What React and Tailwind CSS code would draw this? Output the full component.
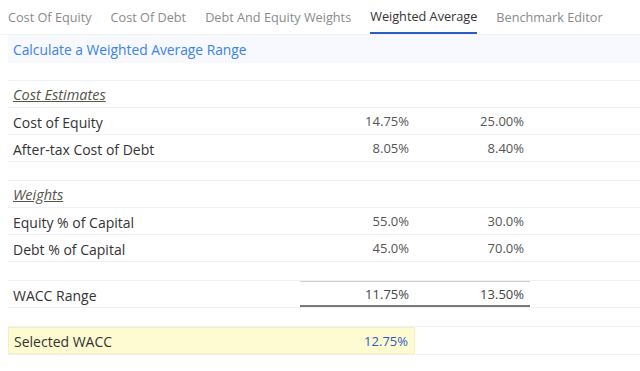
import React from 'react';

const tabs = ['Cost Of Equity', 'Cost Of Debt', 'Debt And Equity Weights', 'Weighted Average', 'Benchmark Editor'];

function Row({ label, a, b, italic }) {
    return (
        <div className="flex h-[27px] items-center pt-[2px] border-b border-[#f0f0f8] text-[13px]">
            <div className={`w-[292px] pl-[5px] ${italic ? 'italic underline text-[14.5px] text-[#55554a]' : 'text-[14px] text-[#333]'}`}>{label}</div>
            <div className="w-[115px] pr-[6px] text-right text-[#555]">{a}</div>
            <div className="w-[115px] pr-[6px] text-right text-[#555]">{b}</div>
        </div>
    );
}

function Spacer({ h }) {
    return <div className={`${h} border-b border-[#f0f0f8]`} />;
}

export default function App() {
    return (
        <div className="w-[640px] h-[371px] bg-white overflow-hidden" style={{ fontFamily: '"Open Sans", "Liberation Sans", sans-serif' }}>
            <div className="flex h-[35px] pl-[8px] gap-[19px] border-b border-[#f2f2f2] text-[12.7px]">
                {tabs.map((t) => (
                    <div
                        key={t}
                        className={`flex items-center h-full pt-[2px] ${t === 'Weighted Average' ? 'text-[#333] border-b-2 border-[#2b5bc6]' : 'text-[#8a8a8a]'}`}
                    >
                        {t}
                    </div>
                ))}
            </div>
            <div className="ml-[8px]">
                <div className="h-[28px] bg-[#f7f9fe] flex items-center pl-[5px] pt-[2px] text-[13.8px] text-[#3a82ee]">
                    Calculate a Weighted Average Range
                </div>
                <Spacer h="h-[18px]" />
                <Row label="Cost Estimates" italic />
                <Row label="Cost of Equity" a="14.75%" b="25.00%" />
                <Row label="After-tax Cost of Debt" a="8.05%" b="8.40%" />
                <Spacer h="h-[19px]" />
                <Row label="Weights" italic />
                <Row label="Equity % of Capital" a="55.0%" b="30.0%" />
                <Row label="Debt % of Capital" a="45.0%" b="70.0%" />
                <Spacer h="h-[19px]" />
                <div className="flex h-[27px] border-b border-[#f0f0f8] text-[13px]">
                    <div className="w-[292px] pl-[5px] pt-[2px] flex items-center text-[14px] text-[#333]">WACC Range</div>
                    <div className="flex w-[230px] pt-[2px] border-t border-[#cfcfcf] border-b-2 border-b-[#7a7a7a]">
                        <div className="w-[115px] pr-[6px] flex items-center justify-end text-[#444]">11.75%</div>
                        <div className="w-[115px] pr-[6px] flex items-center justify-end text-[#444]">13.50%</div>
                    </div>
                </div>
                <Spacer h="h-[19px]" />
                <div className="flex h-[28px] border-b border-[#f0f0f8] text-[13px]">
                    <div className="flex w-[407px] pt-[2px] bg-[#fefbd2] border border-[#f7f0bd]">
                        <div className="w-[292px] pl-[5px] flex items-center text-[14px] text-[#333]">Selected WACC</div>
                        <div className="w-[115px] pr-[6px] flex items-center justify-end text-[#2d5bc4]">12.75%</div>
                    </div>
                </div>
            </div>
        </div>
    );
}
